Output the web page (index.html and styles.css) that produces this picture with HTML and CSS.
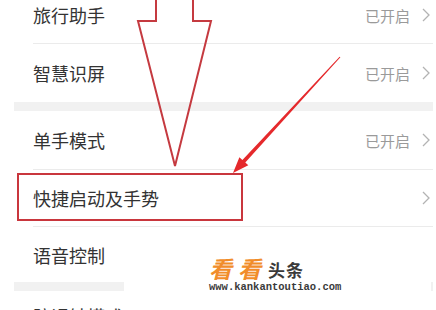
FILE: index.html
```html
<!DOCTYPE html>
<html lang="zh-CN">
<head>
<meta charset="utf-8">
<title>设置</title>
<link rel="stylesheet" href="styles.css">
</head>
<body>
<div class="page">
  <div class="list">
    <section class="group group--first">
      <div class="row row--h56">
        <span class="label">旅行助手</span>
        <span class="value">已开启</span>
        <svg class="chev" viewBox="0 0 8 14"><path d="M1 1 L7 7 L1 13"/></svg>
      </div>
      <div class="row row--h59">
        <span class="label">智慧识屏</span>
        <span class="value">已开启</span>
        <svg class="chev" viewBox="0 0 8 14"><path d="M1 1 L7 7 L1 13"/></svg>
      </div>
    </section>
    <div class="gap"></div>
    <section class="group">
      <div class="row row--h58">
        <span class="label">单手模式</span>
        <span class="value">已开启</span>
        <svg class="chev" viewBox="0 0 8 14"><path d="M1 1 L7 7 L1 13"/></svg>
      </div>
      <div class="row row--h57">
        <span class="label">快捷启动及手势</span>
        <svg class="chev" viewBox="0 0 8 14"><path d="M1 1 L7 7 L1 13"/></svg>
      </div>
      <div class="row row--h56">
        <span class="label">语音控制</span>
        <svg class="chev" viewBox="0 0 8 14"><path d="M1 1 L7 7 L1 13"/></svg>
      </div>
    </section>
    <div class="gap"></div>
    <section class="group">
      <div class="row row--h50">
        <span class="label">防误触模式</span>
      </div>
    </section>
  </div>

  <div class="highlight"></div>

  <svg class="arrows" viewBox="0 0 436 310" width="436" height="310">
    <polygon class="big-arrow" points="156,-3 156,21 138,21 175,166 211,21 193,21 193,-3"/>
    <polygon class="thin-arrow" points="340.4,57.3 339.6,56.7 242.4,159.9 239.4,157.2 233,173 248.3,165.3 245.3,162.6"/>
  </svg>

  <div class="watermark">
    <div class="wm-title"><span class="wm-orange">看看</span><span class="wm-dark">头条</span></div>
    <div class="wm-url">www.kankantoutiao.com</div>
  </div>
</div>
</body>
</html>
```

FILE: styles.css
```css
* { box-sizing: border-box; }
html, body {
  margin: 0;
  padding: 0;
  background: #ffffff;
}
.page {
  position: relative;
  width: 436px;
  height: 310px;
  overflow: hidden;
  background: #ffffff;
  font-family: "Noto Sans CJK SC", "Noto Sans", sans-serif;
}
.list {
  margin: -13px 3px 0 14px;
  display: flex;
  flex-direction: column;
}
.group {
  display: flex;
  flex-direction: column;
}
.gap {
  height: 9px;
  background: #f1f1f1;
}
.row {
  display: flex;
  align-items: center;
  margin-left: 19px;
  padding-right: 2px;
  border-top: 1px solid #ebebeb;
}
.row:first-child { border-top: 0; }
.row--h50 { height: 50px; }
.row--h56 { height: 56px; }
.row--h57 { height: 57px; }
.row--h58 { height: 58px; }
.row--h59 { height: 59px; }
.label {
  font-size: 18px;
  color: #333333;
  flex: 1;
  line-height: 1;
}
.value {
  font-size: 15px;
  color: #9a9a9a;
  margin-right: 12px;
  line-height: 1;
}
.chev {
  width: 8px;
  height: 14px;
  margin-right: 1px;
  fill: none;
  stroke: #b3b3b3;
  stroke-width: 1.3;
}
.highlight {
  position: absolute;
  left: 17px;
  top: 173px;
  width: 226px;
  height: 48px;
  border: 2px solid #c9363d;
}
.arrows {
  position: absolute;
  left: 0;
  top: 0;
}
.big-arrow {
  fill: none;
  stroke: #c53a40;
  stroke-width: 2;
  stroke-linejoin: miter;
}
.thin-arrow {
  fill: #e5292c;
}
.watermark {
  position: absolute;
  left: 124px;
  top: 232px;
  width: 307px;
  height: 78px;
  background: #ffffff;
  padding: 25px 0 0 85px;
  display: flex;
  flex-direction: column;
}
.wm-title {
  display: flex;
  align-items: flex-end;
  line-height: 1;
  height: 22px;
  overflow: visible;
}
.wm-orange {
  font-size: 23px;
  font-weight: 700;
  font-style: italic;
  letter-spacing: 6px;
  color: #f18d2a;
  line-height: 22px;
}
.wm-dark {
  font-size: 17px;
  font-weight: 700;
  color: #3a3a3a;
  margin-left: 1px;
  letter-spacing: 1px;
  line-height: 18px;
}
.wm-url {
  margin-top: 3px;
  font-family: "Liberation Mono", monospace;
  font-size: 10.5px;
  font-weight: 700;
  color: #3a3a3a;
  line-height: 10px;
}
```
